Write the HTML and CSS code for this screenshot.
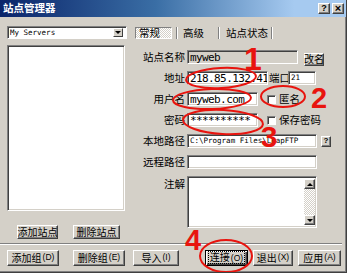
FILE: index.html
```html
<!DOCTYPE html>
<html>
<head>
    <meta charset="utf-8">
    <title>站点管理器</title>
    <link rel="stylesheet" href="styles.css">
</head>
<body>

<div class="window">
    <div class="titlebar">
        <span class="title">站点管理器</span>
        <span class="tbtn">?</span>
        <span class="tbtn close">×</span>
    </div>

    <div class="main">
        <!-- site tree -->
        <div class="sites">
            <div class="combo">
                <span class="small">My Servers</span>
                <span class="drop"><i class="down"></i></span>
            </div>
            <div class="tree"></div>
            <div class="siteBtns">
                <span class="btn addSite">添加站点</span>
                <span class="btn delSite">删除站点</span>
            </div>
        </div>

        <!-- general page -->
        <div class="page">
            <div class="tabs">
                <span class="tab on">常规</span><i class="vsep first"></i>
                <span class="tab adv">高级</span><i class="vsep"></i>
                <span class="tab state">站点状态</span><i class="vsep"></i>
            </div>

            <div class="form">
                <div class="row">
                    <span class="lbl">站点名称</span>
                    <span class="field ro wName"><span class="mono">myweb</span></span>
                    <span class="btn rename">改名</span>
                </div>
                <div class="row">
                    <span class="lbl">地址</span>
                    <span class="field wAddr"><span class="mono">218.85.132.41</span></span>
                    <span class="portLbl">端口</span>
                    <span class="field wPort"><span class="small">21</span></span>
                </div>
                <div class="row">
                    <span class="lbl">用户名</span>
                    <span class="field wUser"><span class="mono">myweb.com</span></span>
                    <span class="check"></span>
                    <span class="chkLbl">匿名</span>
                </div>
                <div class="row">
                    <span class="lbl">密码</span>
                    <span class="field wUser"><span class="mono">**********</span></span>
                    <span class="check"></span>
                    <span class="chkLbl">保存密码</span>
                </div>
                <div class="row">
                    <span class="lbl">本地路径</span>
                    <span class="field wPath"><span class="small">C:\Program Files\LeapFTP</span></span>
                    <span class="btn help">?</span>
                </div>
                <div class="row">
                    <span class="lbl">远程路径</span>
                    <span class="field wPath"></span>
                </div>
                <div class="row notesRow">
                    <span class="lbl">注解</span>
                    <span class="field wPath notes">
                        <span class="txt"></span>
                        <span class="vscroll">
                            <span class="sbtn"><i class="up"></i></span>
                            <span class="track"></span>
                            <span class="sbtn"><i class="down"></i></span>
                        </span>
                    </span>
                </div>
            </div>
        </div>
    </div>

    <div class="hsep"></div>

    <div class="bottomBtns">
        <span class="btn bAddGrp">添加组<span class="acc">(D)</span></span>
        <span class="btn bDelGrp">删除组<span class="acc">(E)</span></span>
        <span class="btn bImport">导入<span class="acc">(I)</span></span>
        <span class="btn default bConnect"><span class="focus">连接<span class="acc">(O)</span></span></span>
        <span class="btn bExit">退出<span class="acc">(X)</span></span>
        <span class="btn bApply">应用<span class="acc">(A)</span></span>
    </div>

    <!-- red marks drawn over the dialog -->
    <svg class="marks" width="347" height="273" viewBox="0 0 347 273">
        <g fill="none" stroke="#e8140e" stroke-width="2">
            <ellipse cx="221" cy="78" rx="35" ry="10" transform="rotate(-3 221 78)"/>
            <ellipse cx="212" cy="99" rx="39" ry="10" transform="rotate(-2 212 99)"/>
            <ellipse cx="283" cy="96.5" rx="22" ry="10.5"/>
            <ellipse cx="223" cy="122" rx="40" ry="12" transform="rotate(3 223 122)"/>
            <ellipse cx="226" cy="256" rx="26" ry="16"/>
        </g>
        <g class="nums" fill="#e8140e">
            <text x="253" y="70" font-size="32">1</text>
            <text x="319" y="108" font-size="29">2</text>
            <text x="269" y="147" font-size="30">3</text>
            <text x="193" y="250" font-size="29">4</text>
        </g>
    </svg>
</div>

</body>
</html>
```

FILE: styles.css
```css
body {
    margin: 0;
    background: #d4d0c8;
}

.window {
    position: relative;
    width: 347px;
    height: 273px;
    box-sizing: border-box;
    background: #d4d0c8;
    border-right: 1px solid #404040;
    border-bottom: 1px solid #404040;
    box-shadow: inset -1px -1px #808080;
    font-family: "Noto Sans CJK SC", sans-serif;
    font-size: 10.5px;
    line-height: 1;
    color: #000;
    overflow: hidden;
    display: flex;
    flex-direction: column;
}

/* title bar */
.titlebar {
    height: 17px;
    flex: none;
    display: flex;
    align-items: center;
    padding: 0 2px 0 3px;
    background: linear-gradient(to right, #0a246a 0%, #3a6ea5 45%, #a6caf0 85%);
}
.title {
    color: #fff;
    font-weight: bold;
    margin-right: auto;
}
.tbtn {
    width: 12px;
    height: 11px;
    box-sizing: border-box;
    margin-left: 2px;
    display: flex;
    align-items: center;
    justify-content: center;
    background: #d4d0c8;
    border: 1px solid;
    border-color: #fff #404040 #404040 #fff;
    box-shadow: inset -1px -1px #808080;
    font-family: "Liberation Sans", sans-serif;
    font-weight: bold;
    font-size: 9px;
}
.close {
    font-size: 11px;
}

/* shared widgets */
.btn {
    display: flex;
    align-items: center;
    justify-content: center;
    box-sizing: border-box;
    padding-bottom: 1px;
    background: #d4d0c8;
    border: 1px solid;
    border-color: #fff #404040 #404040 #fff;
    box-shadow: inset -1px -1px #808080;
    font-size: 10px;
    white-space: nowrap;
}
.field {
    display: flex;
    align-items: center;
    box-sizing: border-box;
    height: 14px;
    padding-left: 2px;
    background: #fff;
    border: 1px solid;
    border-color: #808080 #fff #fff #808080;
    box-shadow: inset 1px 1px #404040, inset -1px -1px #d4d0c8;
    overflow: hidden;
    white-space: nowrap;
}
.field.ro {
    background: #d4d0c8;
}
.mono {
    font-family: "DejaVu Sans Mono", monospace;
    font-size: 11px;
    letter-spacing: -0.6px;
}
.small {
    font-family: "DejaVu Sans Mono", monospace;
    font-size: 7.5px;
}
.acc {
    font-family: "Liberation Sans", sans-serif;
    font-size: 8.5px;
    margin-left: 1px;
}
i.down, i.up {
    width: 0;
    height: 0;
    border-left: 3px solid transparent;
    border-right: 3px solid transparent;
}
i.down {
    border-top: 3px solid #000;
}
i.up {
    border-bottom: 3px solid #000;
}

/* main area */
.main {
    height: 226px;
    flex: none;
    display: flex;
}
.sites {
    margin-left: 7px;
    width: 120px;
    display: flex;
    flex-direction: column;
}
.combo {
    margin-top: 9px;
    height: 13px;
    display: flex;
    align-items: center;
    box-sizing: border-box;
    padding-left: 2px;
    background: #fff;
    border: 1px solid;
    border-color: #808080 #fff #fff #808080;
    box-shadow: inset 1px 1px #404040;
}
.drop {
    margin-left: auto;
    margin-right: 3px;
    width: 10px;
    height: 9px;
    box-sizing: border-box;
    display: flex;
    align-items: center;
    justify-content: center;
    background: #d4d0c8;
    border: 1px solid;
    border-color: #fff #404040 #404040 #fff;
}
.tree {
    margin-top: 6px;
    width: 118px;
    height: 166px;
    box-sizing: border-box;
    background: #fff;
    border: 1px solid;
    border-color: #808080 #fff #fff #808080;
    box-shadow: inset 1px 1px #404040, inset -1px -1px #d4d0c8;
}
.siteBtns {
    margin-top: 14px;
    display: flex;
    height: 14px;
}
.addSite {
    margin-left: 10px;
    width: 41px;
}
.delSite {
    margin-left: 15px;
    width: 47px;
}

/* tabs */
.page {
    margin-left: 8px;
    flex: 1;
}
.tabs {
    margin-top: 10px;
    height: 12px;
    display: flex;
}
.tab {
    display: flex;
    align-items: center;
    box-sizing: border-box;
}
.tab.on {
    width: 37px;
    padding-left: 3px;
    border: 1px solid;
    border-color: #808080 #fff #fff #808080;
    background: repeating-conic-gradient(#fff 0% 25%, #d4d0c8 0% 50%) 0 0 / 2px 2px;
}
.tab.adv {
    padding: 0 14px 0 5px;
}
.tab.state {
    padding: 0 3px 0 6px;
}
.vsep {
    width: 0;
    border-left: 1px solid #808080;
    border-right: 1px solid #fff;
}
.vsep.first {
    margin-left: 4px;
}

/* form */
.form {
    margin-top: 11px;
    display: flex;
    flex-direction: column;
    gap: 7px;
}
.row {
    display: flex;
    align-items: center;
    height: 14px;
}
.lbl {
    width: 52px;
    padding-right: 2px;
    box-sizing: border-box;
    text-align: right;
    white-space: nowrap;
}
.wName { width: 111px; }
.wAddr { width: 81px; }
.wPort { width: 28px; }
.wUser { width: 71px; }
.wPath { width: 130px; }
.rename {
    margin-left: 6px;
    width: 20px;
    height: 13px;
    margin-top: 4px;
}
.portLbl {
    margin-left: 1px;
    width: 19px;
    white-space: nowrap;
}
.check {
    margin-left: 9px;
    width: 9px;
    height: 9px;
    box-sizing: border-box;
    background: #fff;
    border: 1px solid;
    border-color: #808080 #fff #fff #808080;
    box-shadow: inset 1px 1px #404040;
}
.chkLbl {
    margin-left: 3px;
    white-space: nowrap;
}
.help {
    margin-left: 4px;
    width: 10px;
    height: 11px;
    padding-bottom: 0;
    font-family: "Liberation Sans", sans-serif;
    font-weight: bold;
    font-size: 8px;
}
.notesRow {
    height: 52px;
    align-items: flex-start;
}
.notesRow .lbl {
    margin-top: 3px;
}
.notes {
    height: 52px;
    padding: 2px 1px 2px 2px;
    align-items: stretch;
}
.txt {
    flex: 1;
}
.vscroll {
    width: 11px;
    display: flex;
    flex-direction: column;
}
.sbtn {
    height: 10px;
    box-sizing: border-box;
    display: flex;
    align-items: center;
    justify-content: center;
    background: #d4d0c8;
    border: 1px solid;
    border-color: #fff #404040 #404040 #fff;
    box-shadow: inset -1px -1px #808080;
}
.track {
    flex: 1;
    background: repeating-conic-gradient(#fff 0% 25%, #d4d0c8 0% 50%) 0 0 / 2px 2px;
}

/* bottom */
.hsep {
    flex: none;
    margin-right: 4px;
    border-top: 1px solid #808080;
    border-bottom: 1px solid #fff;
}
.bottomBtns {
    margin-top: 5px;
    height: 16px;
    display: flex;
    padding-left: 7px;
}
.bAddGrp { width: 52px; }
.bDelGrp { width: 52px; margin-left: 14px; }
.bImport { width: 46px; margin-left: 8px; }
.bConnect { width: 43px; margin-left: 26px; }
.bExit { width: 40px; margin-left: 5px; }
.bApply { width: 43px; margin-left: 5px; }
.default {
    border-color: #000;
    box-shadow: inset 1px 1px #fff, inset -1px -1px #404040, inset -2px -2px #808080;
}
.focus {
    outline: 1px dotted #000;
    outline-offset: 0;
    padding: 0 1px;
}

/* annotation layer */
.marks {
    position: absolute;
    top: 0;
    left: 0;
    pointer-events: none;
}
.nums text {
    font-family: "Liberation Sans", sans-serif;
    font-weight: bold;
    text-anchor: middle;
}
```
